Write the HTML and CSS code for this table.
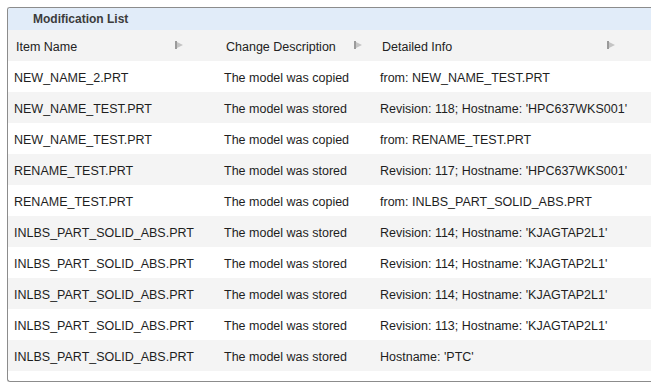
FILE: index.html
```html
<!DOCTYPE html>
<html>
<head>
<meta charset="utf-8">
<link rel="stylesheet" href="styles.css">
</head>
<body>
<div class="panel">
  <div class="title">Modification List</div>
  <div class="grid">
    <div class="hcell c1"><span>Item Name</span><svg class="sort" width="8" height="8" viewBox="0 0 8 8"><rect x="0" y="0" width="2" height="8" fill="#9a9a9a"/><path d="M2 1 L8 4 L2 7 Z" fill="#c4c4c4"/></svg></div>
    <div class="hcell c2"><span>Change Description</span><svg class="sort" width="8" height="8" viewBox="0 0 8 8"><rect x="0" y="0" width="2" height="8" fill="#9a9a9a"/><path d="M2 1 L8 4 L2 7 Z" fill="#c4c4c4"/></svg></div>
    <div class="hcell c3"><span>Detailed Info</span><svg class="sort" width="8" height="8" viewBox="0 0 8 8"><rect x="0" y="0" width="2" height="8" fill="#9a9a9a"/><path d="M2 1 L8 4 L2 7 Z" fill="#c4c4c4"/></svg></div>

    <div class="cell">NEW_NAME_2.PRT</div><div class="cell">The model was copied</div><div class="cell">from: NEW_NAME_TEST.PRT</div>
    <div class="cell alt">NEW_NAME_TEST.PRT</div><div class="cell alt">The model was stored</div><div class="cell alt">Revision: 118; Hostname: 'HPC637WKS001'</div>
    <div class="cell">NEW_NAME_TEST.PRT</div><div class="cell">The model was copied</div><div class="cell">from: RENAME_TEST.PRT</div>
    <div class="cell alt">RENAME_TEST.PRT</div><div class="cell alt">The model was stored</div><div class="cell alt">Revision: 117; Hostname: 'HPC637WKS001'</div>
    <div class="cell">RENAME_TEST.PRT</div><div class="cell">The model was copied</div><div class="cell">from: INLBS_PART_SOLID_ABS.PRT</div>
    <div class="cell alt">INLBS_PART_SOLID_ABS.PRT</div><div class="cell alt">The model was stored</div><div class="cell alt">Revision: 114; Hostname: 'KJAGTAP2L1'</div>
    <div class="cell">INLBS_PART_SOLID_ABS.PRT</div><div class="cell">The model was stored</div><div class="cell">Revision: 114; Hostname: 'KJAGTAP2L1'</div>
    <div class="cell alt">INLBS_PART_SOLID_ABS.PRT</div><div class="cell alt">The model was stored</div><div class="cell alt">Revision: 114; Hostname: 'KJAGTAP2L1'</div>
    <div class="cell">INLBS_PART_SOLID_ABS.PRT</div><div class="cell">The model was stored</div><div class="cell">Revision: 113; Hostname: 'KJAGTAP2L1'</div>
    <div class="cell alt">INLBS_PART_SOLID_ABS.PRT</div><div class="cell alt">The model was stored</div><div class="cell alt">Hostname: 'PTC'</div>
  </div>
  <div class="foot"></div>
</div>
</body>
</html>
```
FILE: styles.css
```css
html, body {
  margin: 0;
  padding: 0;
  background: #ffffff;
  overflow: hidden;
}
body {
  font-family: "Liberation Sans", Arial, sans-serif;
  font-size: 12.5px;
  color: #1e1e1e;
  width: 651px;
  height: 389px;
}
.panel {
  margin: 7px 0 0 7px;
  width: 643px;
  border: 1px solid #8c8c8c;
  border-right: none;
  border-radius: 3px 0 0 3px;
  overflow: hidden;
}
.title {
  height: 22px;
  background: #e1ecf9;
  padding-left: 25px;
  font-size: 12px;
  font-weight: bold;
  color: #3c3c3c;
  display: flex;
  align-items: center;
}
.grid {
  display: grid;
  grid-template-columns: 210px 156px 277px;
}
.hcell {
  box-sizing: border-box;
  height: 31px;
  padding-top: 2px;
  background: #f3f3f3;
  display: flex;
  align-items: center;
  justify-content: space-between;
  padding-left: 8px;
  color: #222;
}
.hcell.c1 { padding-right: 35px; }
.hcell.c2 { padding-right: 12px; }
.hcell.c3 { padding-right: 36px; }
.sort {
  display: block;
  margin-top: -4px;
}
.cell {
  box-sizing: border-box;
  height: 31px;
  padding-top: 2px;
  display: flex;
  align-items: center;
  padding-left: 6px;
  white-space: nowrap;
  overflow: hidden;
}
.cell.alt {
  background: #f4f4f4;
}
.foot {
  height: 10px;
}
```
